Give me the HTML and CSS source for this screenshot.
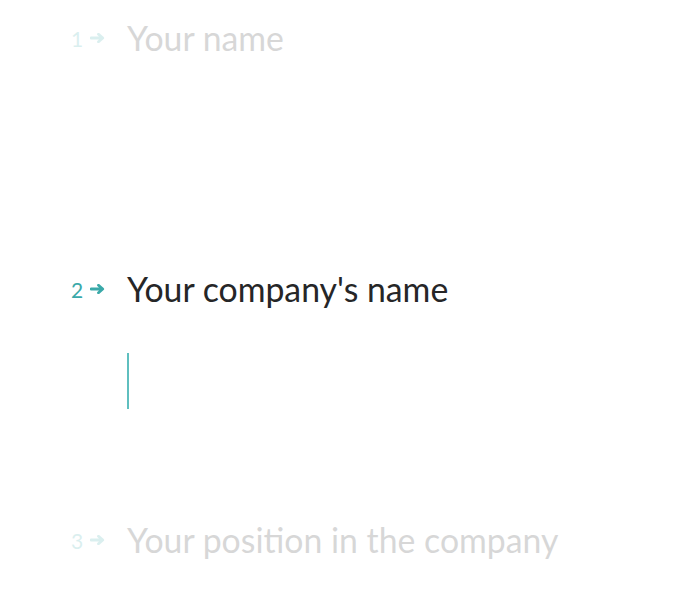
FILE: index.html
```html
<!DOCTYPE html>
<html lang="en">
<head>
<meta charset="utf-8">
<title>Form</title>
<link rel="stylesheet" href="styles.css">
</head>
<body>
<main class="form">
  <section class="question faded">
    <div class="label">
      <span class="num">1</span>
      <svg class="arrow" width="15" height="10" viewBox="0 0 15 10"><path d="M1 5H12.5M8.5 1.3L12.7 5L8.5 8.7" fill="none" stroke="currentColor" stroke-width="2.8" stroke-linecap="round" stroke-linejoin="round"/></svg>
    </div>
    <div class="body">
      <h2 class="title">Your name</h2>
    </div>
  </section>
  <section class="question active">
    <div class="label">
      <span class="num">2</span>
      <svg class="arrow" width="15" height="10" viewBox="0 0 15 10"><path d="M1 5H12.5M8.5 1.3L12.7 5L8.5 8.7" fill="none" stroke="currentColor" stroke-width="2.8" stroke-linecap="round" stroke-linejoin="round"/></svg>
    </div>
    <div class="body">
      <h2 class="title">Your company's name</h2>
      <div class="answer"><span class="caret"></span></div>
    </div>
  </section>
  <section class="question faded">
    <div class="label">
      <span class="num">3</span>
      <svg class="arrow" width="15" height="10" viewBox="0 0 15 10"><path d="M1 5H12.5M8.5 1.3L12.7 5L8.5 8.7" fill="none" stroke="currentColor" stroke-width="2.8" stroke-linecap="round" stroke-linejoin="round"/></svg>
    </div>
    <div class="body">
      <h2 class="title">Your position in the company</h2>
    </div>
  </section>
</main>
</body>
</html>
```
FILE: styles.css
```css
html, body {
  margin: 0;
  background: #ffffff;
  overflow: hidden;
}
body {
  font-family: Lato, "Noto Sans", sans-serif;
  color: #262627;
}
.form {
  display: flex;
  flex-direction: column;
  padding: 16px 0 0 71px;
}
.question {
  display: flex;
  align-items: flex-start;
  height: 251px;
}
.question.faded {
  opacity: 0.18;
}
.label {
  display: flex;
  align-items: center;
  width: 56px;
  height: 44px;
  color: #3aa9a9;
}
.num {
  font-size: 21px;
  margin-right: 7px;
}
.arrow {
  display: block;
}
.title {
  margin: 0;
  font-size: 33.8px;
  font-weight: 400;
  line-height: 44px;
}
.answer {
  margin-top: 42px;
  height: 56px;
}
.caret {
  display: block;
  width: 2px;
  height: 56px;
  background: #5fbfbf;
}
```
